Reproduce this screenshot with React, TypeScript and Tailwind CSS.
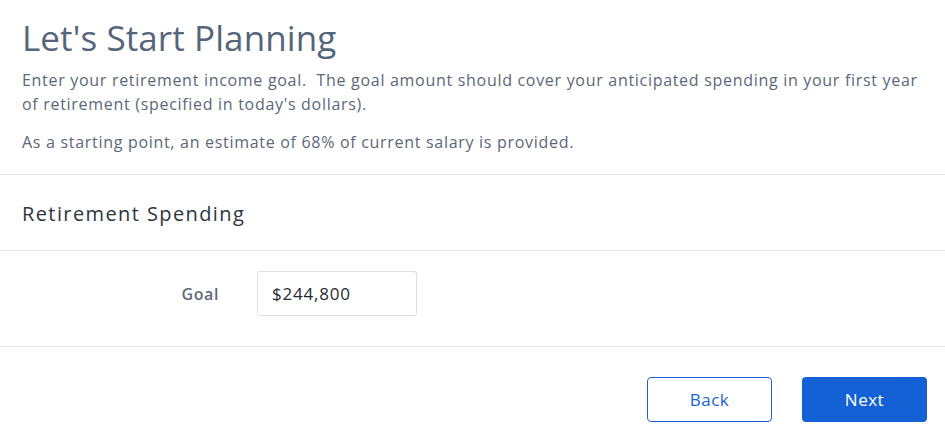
import React from 'react';

export default function App() {
  return (
    <div className="w-[945px] h-[446px] bg-white overflow-hidden font-['Open_Sans',sans-serif]">
      <div className="px-[22px] pt-[14px] pb-[20px] border-b border-[#e3e5e8]">
        <h1 className="text-[35px] leading-[48px] text-[#55657a] tracking-[0.1px]">Let's Start Planning</h1>
        <p className="mt-[6px] text-[16px] leading-[24px] text-[#5b6877] tracking-[0.7px]">
          Enter your retirement income goal.&nbsp; The goal amount should cover your anticipated spending in your first year of retirement (specified in today's dollars).
        </p>
        <p className="mt-[14px] text-[16px] leading-[24px] text-[#5b6877] tracking-[0.7px]">
          As a starting point, an estimate of 68% of current salary is provided.
        </p>
      </div>
      <div className="h-[76px] px-[22px] pt-[2px] flex items-center border-b border-[#e3e5e8]">
        <h2 className="text-[20px] text-[#2c3540] tracking-[1.4px]">Retirement Spending</h2>
      </div>
      <div className="h-[96px] flex items-start pt-[20px] border-b border-[#e3e5e8]">
        <label className="w-[219px] h-[45px] flex items-center justify-end text-[16px] font-semibold text-[#5e6b78] tracking-[0.6px]">Goal</label>
        <input
          className="ml-[38px] w-[160px] h-[45px] px-[14px] border border-[#dcdfe3] rounded-[3px] text-[17px] text-[#1f2933] tracking-[0.8px] outline-none"
          defaultValue="$244,800"
        />
      </div>
      <div className="flex justify-end gap-[30px] pt-[30px] pr-[18px]">
        <button className="w-[125px] h-[45px] border border-[#1b62d4] rounded-[4px] text-[#1b62d4] text-[17px] tracking-[0.5px]">Back</button>
        <button className="w-[125px] h-[45px] bg-[#1461d6] rounded-[4px] text-white text-[17px] tracking-[0.5px]">Next</button>
      </div>
    </div>
  );
}
